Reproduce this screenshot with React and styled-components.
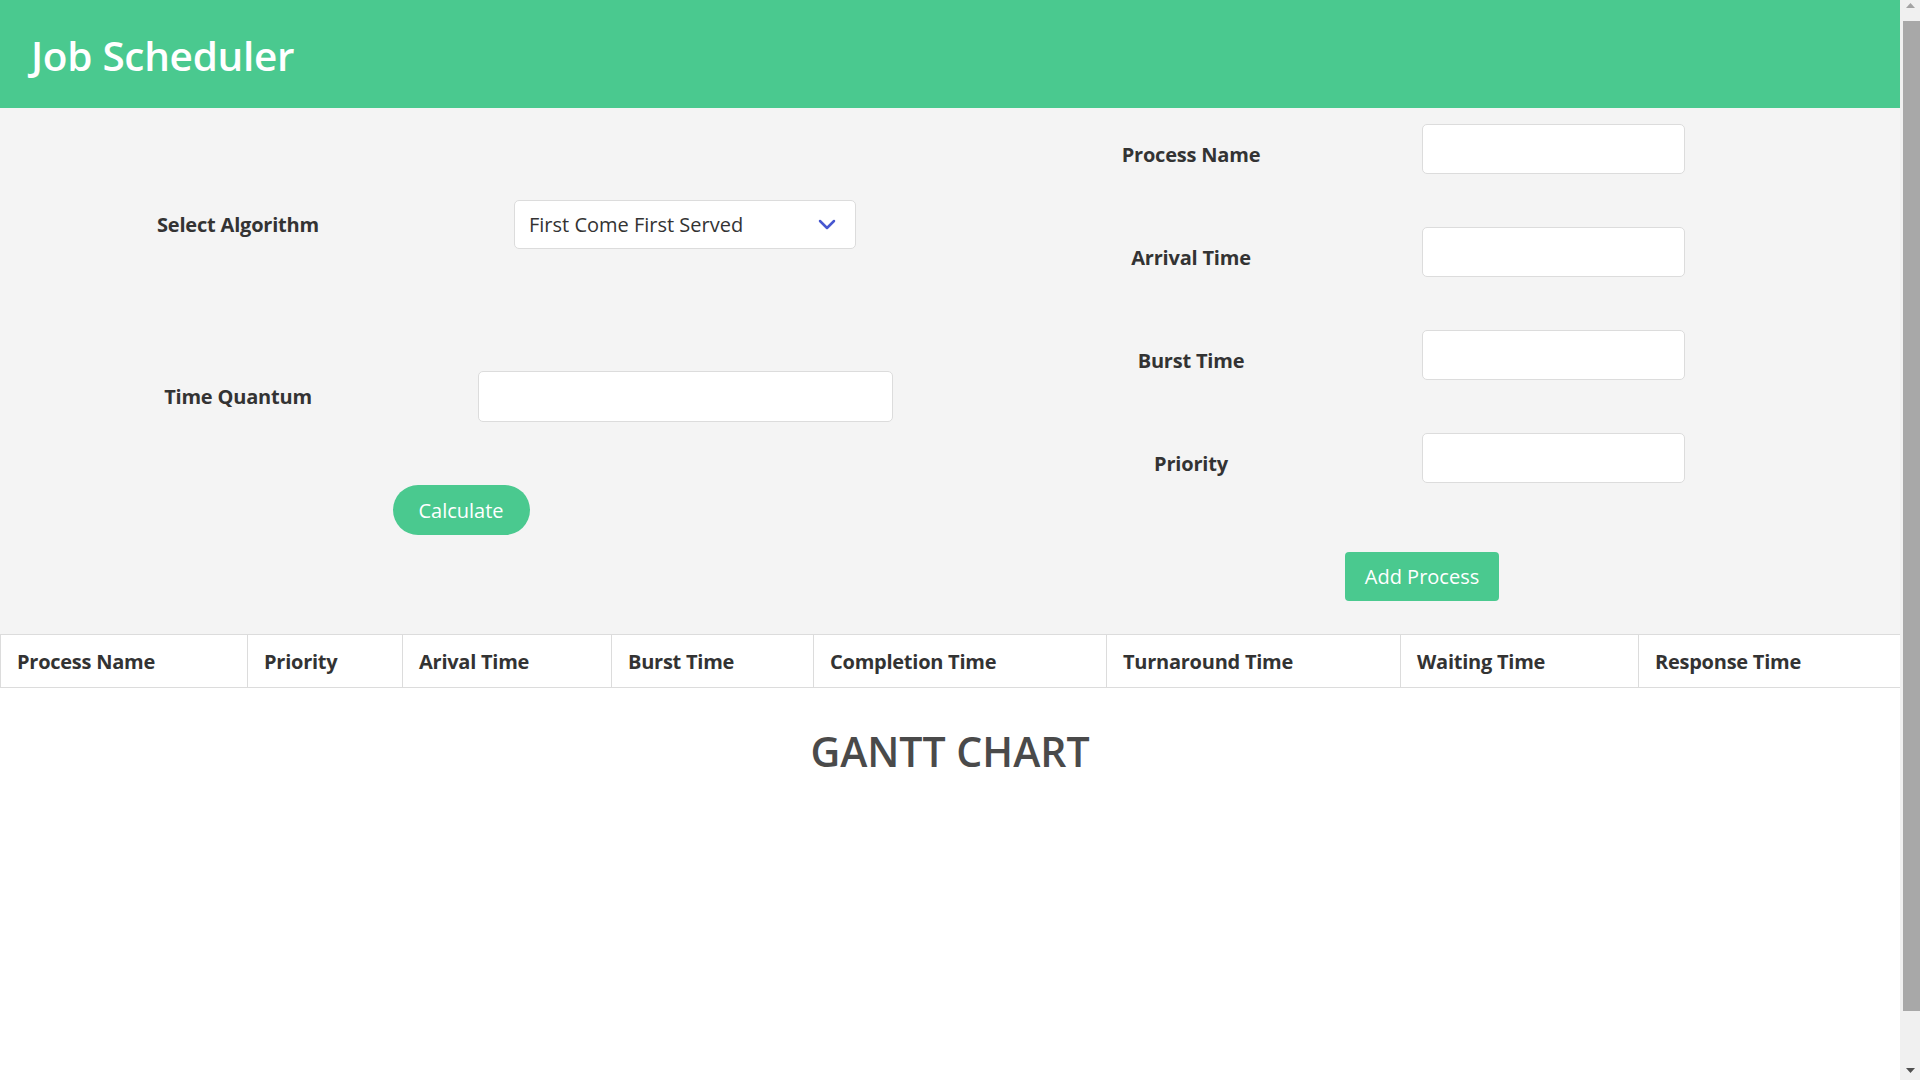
import React from "react";
import styled, { createGlobalStyle } from "styled-components";

const GlobalStyle = createGlobalStyle`
  body {
    margin: 0 20px 0 0;
    font-family: "Open Sans", "Noto Sans", sans-serif;
    color: #333;
    background: #fff;
  }
  * { box-sizing: border-box; }
`;

const GREEN = "#4ac98f";

const Header = styled.header`
  height: 108px;
  background: ${GREEN};
  display: flex;
  align-items: center;
  padding-left: 31px;
`;

const Title = styled.h1`
  margin: 0;
  color: #fff;
  font-size: 40.5px;
  font-weight: 600;
  letter-spacing: -0.3px;
  transform: translateY(1px);
`;

const FormSection = styled.section`
  background: #f4f4f4;
  display: flex;
  padding-bottom: 33px;
`;

const LeftPanel = styled.div`
  width: 922px;
  display: flex;
  flex-direction: column;
  padding-top: 92px;
`;

const LeftGrid = styled.div`
  display: grid;
  grid-template-columns: 476px 418px;
  row-gap: 122px;
  align-items: center;
`;

const RightPanel = styled.div`
  flex: 1;
  display: flex;
  flex-direction: column;
  padding-top: 16px;
`;

const RightGrid = styled.div`
  display: grid;
  grid-template-columns: 420px 263px;
  column-gap: 21px;
  row-gap: 53px;
  padding-left: 59px;
  align-items: center;
`;

const Label = styled.label`
  justify-self: center;
  font-size: 20px;
  font-weight: 700;
  color: #333;
  letter-spacing: -0.2px;
  margin-top: ${(p) => p.$shift || 0}px;
`;

const Control = styled.div`
  justify-self: center;
  position: relative;
  width: ${(p) => p.$w}px;
`;

const TextInput = styled.input`
  display: block;
  width: ${(p) => p.$w}px;
  height: ${(p) => p.$h}px;
  justify-self: center;
  background: #fff;
  border: 1px solid #dcdcdc;
  border-radius: 5px;
  outline: none;
  font-family: inherit;
  font-size: 20px;
  padding: 0 14px;
`;

const Select = styled.select`
  appearance: none;
  display: block;
  width: 100%;
  height: 49px;
  background: #fff;
  border: 1px solid #dcdcdc;
  border-radius: 5px;
  font-family: inherit;
  font-size: 20px;
  color: #333;
  padding: 0 40px 0 14px;
  outline: none;
`;

const Chevron = styled.svg`
  position: absolute;
  right: 20px;
  top: 19px;
  width: 18px;
  height: 11px;
  pointer-events: none;
`;

const ButtonRow = styled.div`
  display: flex;
  justify-content: center;
  margin-top: ${(p) => p.$mt}px;
  padding-left: ${(p) => p.$pl || 0}px;
`;

const PillButton = styled.button`
  height: 50px;
  width: 137px;
  border: none;
  border-radius: 25px;
  background: ${GREEN};
  color: #fff;
  font-family: inherit;
  font-size: 20px;
  cursor: pointer;
`;

const SquareButton = styled.button`
  height: 49px;
  width: 154px;
  border: none;
  border-radius: 4px;
  background: ${GREEN};
  color: #fff;
  font-family: inherit;
  font-size: 20px;
  cursor: pointer;
`;

const Table = styled.table`
  width: 100%;
  border-collapse: collapse;
  table-layout: fixed;
  background: #fff;
`;

const Th = styled.th`
  width: ${(p) => p.$w}px;
  height: 53px;
  border: 1px solid #dcdcdc;
  text-align: left;
  padding: 0 0 0 16px;
  font-size: 20px;
  font-weight: 700;
  color: #333;
  letter-spacing: -0.25px;
  white-space: nowrap;
`;

const GanttSection = styled.section`
  min-height: 455px;
  padding-top: 36px;
`;

const GanttTitle = styled.h2`
  margin: 0;
  text-align: center;
  font-size: 41px;
  font-weight: 600;
  color: #4a4a4a;
  line-height: 54px;
`;

const Scrollbar = styled.div`
  position: fixed;
  top: 0;
  right: 0;
  width: 20px;
  height: 100vh;
  background: #f0f0f0;
  display: flex;
  flex-direction: column;
  align-items: center;
`;

const ArrowBox = styled.div`
  height: ${(p) => p.$h}px;
  display: flex;
  align-items: ${(p) => (p.$down ? "flex-start" : "flex-end")};
  padding: ${(p) => (p.$down ? "0" : "0 0 6px")};
`;

const Thumb = styled.div`
  width: 17px;
  margin-left: 2px;
  height: 990px;
  background: #a8a8a8;
  margin-top: 7px;
`;

const Filler = styled.div`
  flex: 1;
`;

const columns = [
  ["Process Name", 247],
  ["Priority", 155],
  ["Arival Time", 209],
  ["Burst Time", 202],
  ["Completion Time", 293],
  ["Turnaround Time", 294],
  ["Waiting Time", 238],
  ["Response Time", 262],
];

const processFields = ["Process Name", "Arrival Time", "Burst Time", "Priority"];

export default function App() {
  return (
    <>
      <GlobalStyle />
      <Header>
        <Title>Job Scheduler</Title>
      </Header>
      <FormSection>
        <LeftPanel>
          <LeftGrid>
            <Label>Select Algorithm</Label>
            <Control $w={342}>
              <Select defaultValue="fcfs">
                <option value="fcfs">First Come First Served</option>
                <option value="sjf">Shortest Job First</option>
                <option value="srtf">Shortest Remaining Time First</option>
                <option value="rr">Round Robin</option>
                <option value="prio">Priority</option>
              </Select>
              <Chevron viewBox="0 0 18 11" fill="none">
                <path d="M2 2 L9 9 L16 2" stroke="#4757d0" strokeWidth="2.5" strokeLinecap="round" strokeLinejoin="round" />
              </Chevron>
            </Control>
            <Label>Time Quantum</Label>
            <TextInput $w={415} $h={51} type="text" />
          </LeftGrid>
          <ButtonRow $mt={63}>
            <PillButton>Calculate</PillButton>
          </ButtonRow>
        </LeftPanel>
        <RightPanel>
          <RightGrid>
            {processFields.map((f) => (
              <React.Fragment key={f}>
                <Label $shift={11}>{f}</Label>
                <TextInput $w={263} $h={50} type="text" />
              </React.Fragment>
            ))}
          </RightGrid>
          <ButtonRow $mt={69} $pl={22}>
            <SquareButton>Add Process</SquareButton>
          </ButtonRow>
        </RightPanel>
      </FormSection>
      <Table>
        <thead>
          <tr>
            {columns.map(([name, w]) => (
              <Th key={name} $w={w}>{name}</Th>
            ))}
          </tr>
        </thead>
      </Table>
      <GanttSection>
        <GanttTitle>GANTT CHART</GanttTitle>
      </GanttSection>
      <Scrollbar aria-hidden="true">
        <ArrowBox $h={14}>
          <svg width="9" height="5" viewBox="0 0 9 5"><path d="M0 5 L4.5 0 L9 5 Z" fill="#a3a3a3" /></svg>
        </ArrowBox>
        <Thumb />
        <Filler />
        <ArrowBox $h={12} $down>
          <svg width="9" height="5" viewBox="0 0 9 5"><path d="M0 0 L9 0 L4.5 5 Z" fill="#505050" /></svg>
        </ArrowBox>
      </Scrollbar>
    </>
  );
}
